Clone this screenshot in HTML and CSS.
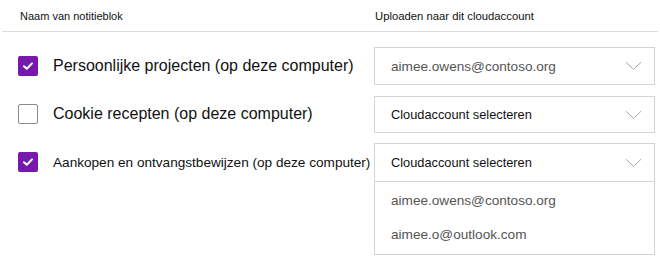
FILE: index.html
```html
<!DOCTYPE html>
<html lang="nl">
<head>
<meta charset="utf-8">
<link rel="stylesheet" href="styles.css">
</head>
<body>
<div class="panel">
  <div class="head">
    <div class="head-name">Naam van notitieblok</div>
    <div class="head-acc">Uploaden naar dit cloudaccount</div>
  </div>
  <div class="row row1">
    <label class="nb"><span class="cb on"><svg viewBox="0 0 20 20"><path d="M6 10.2 L8.8 12.8 L14 7.4"/></svg></span><span class="nb-text big">Persoonlijke projecten (op deze computer)</span></label>
    <div class="dd"><div class="dd-head"><span class="dd-val grey">aimee.owens@contoso.org</span><svg class="chev" viewBox="0 0 18 10"><path d="M1 1 L9 8.5 L17 1"/></svg></div></div>
  </div>
  <div class="row row2">
    <label class="nb"><span class="cb"></span><span class="nb-text big">Cookie recepten (op deze computer)</span></label>
    <div class="dd"><div class="dd-head"><span class="dd-val">Cloudaccount selecteren</span><svg class="chev" viewBox="0 0 18 10"><path d="M1 1 L9 8.5 L17 1"/></svg></div></div>
  </div>
  <div class="row row3">
    <label class="nb"><span class="cb on"><svg viewBox="0 0 20 20"><path d="M6 10.2 L8.8 12.8 L14 7.4"/></svg></span><span class="nb-text small">Aankopen en ontvangstbewijzen (op deze computer)</span></label>
    <div class="dd open">
      <div class="dd-head"><span class="dd-val">Cloudaccount selecteren</span><svg class="chev" viewBox="0 0 18 10"><path d="M1 1 L9 8.5 L17 1"/></svg></div>
      <ul class="dd-list">
        <li>aimee.owens@contoso.org</li>
        <li>aimee.o@outlook.com</li>
      </ul>
    </div>
  </div>
</div>
</body>
</html>
```
FILE: styles.css
```css
html, body {
  margin: 0;
  padding: 0;
  background: #fff;
}
body {
  font-family: "Liberation Sans", Arial, sans-serif;
  color: #111;
}
.panel {
  width: 656px;
  padding-left: 2px;
}
.head {
  display: grid;
  grid-template-columns: 371px 1fr;
  height: 31px;
  border-bottom: 1px solid #dcdcdc;
  font-size: 11px;
  color: #111;
  align-items: center;
}
.head-name { padding-left: 18px; }
.head-acc { padding-left: 2px; font-size: 11.3px; }
.row {
  display: grid;
  grid-template-columns: 372px 281px;
  align-items: start;
}
.row1 { margin-top: 15px; }
.row2 { margin-top: 11px; }
.row3 { margin-top: 10px; }
.nb {
  display: flex;
  align-items: center;
  padding-left: 16px;
  gap: 15px;
  white-space: nowrap;
}
.row1 .nb { height: 38px; }
.row2 .nb { height: 36px; }
.row3 .nb { height: 38px; }
.cb {
  flex: none;
  width: 18px;
  height: 18px;
  border: 1px solid #8a8a8a;
  border-radius: 2px;
  background: #fff;
  display: flex;
}
.cb.on {
  width: 20px;
  height: 20px;
  border: none;
  background: #7719aa;
}
.cb svg { width: 20px; height: 20px; }
.cb svg path {
  fill: none;
  stroke: #fff;
  stroke-width: 2;
  stroke-linecap: round;
  stroke-linejoin: round;
}
.nb-text.big { font-size: 16px; }
.nb-text.small { font-size: 13.6px; }
.dd {
  border: 1px solid #d4d4d4;
  background: #fff;
}
.dd-head {
  display: flex;
  align-items: center;
  justify-content: space-between;
  padding: 0 12px 0 16px;
}
.row1 .dd-head { height: 36px; }
.row2 .dd-head { height: 35px; }
.row3 .dd-head { height: 37px; border-bottom: 1px solid #d4d4d4; }
.dd-val { font-size: 12.8px; color: #111; }
.dd-val.grey { font-size: 13.6px; color: #555; }
.chev { width: 17px; height: 10px; }
.chev path { fill: none; stroke: #a0a0a0; stroke-width: 1; }
.dd-list {
  list-style: none;
  margin: 0;
  padding: 2px 0 2px 16px;
}
.dd-list li {
  height: 34px;
  line-height: 34px;
  font-size: 13.6px;
  color: #555;
}
```
